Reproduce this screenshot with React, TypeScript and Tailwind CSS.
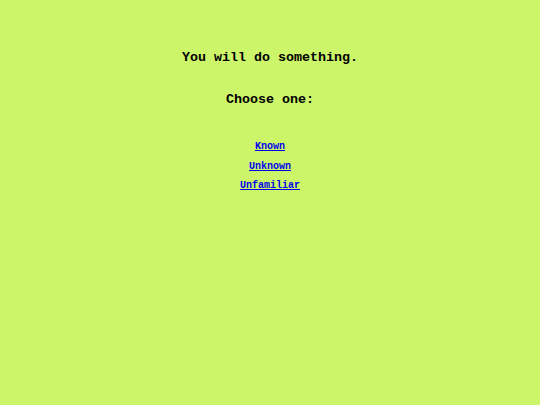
export default function App() {
  return (
    <div className="min-h-[405px] w-full bg-[#ccf56a] flex flex-col items-center pt-[50px] font-['Liberation_Mono',monospace] text-black">
      <div className="text-[13.33px] leading-[16px] font-bold">You will do something.</div>
      <div className="text-[13.33px] leading-[16px] font-bold mt-[26px]">Choose one:</div>
      <div className="flex flex-col items-center mt-[29px] text-[10px] leading-[19.5px] font-bold">
        <a href="#" className="text-[#0000ee] underline">Known</a>
        <a href="#" className="text-[#0000ee] underline">Unknown</a>
        <a href="#" className="text-[#0000ee] underline">Unfamiliar</a>
      </div>
    </div>
  );
}
